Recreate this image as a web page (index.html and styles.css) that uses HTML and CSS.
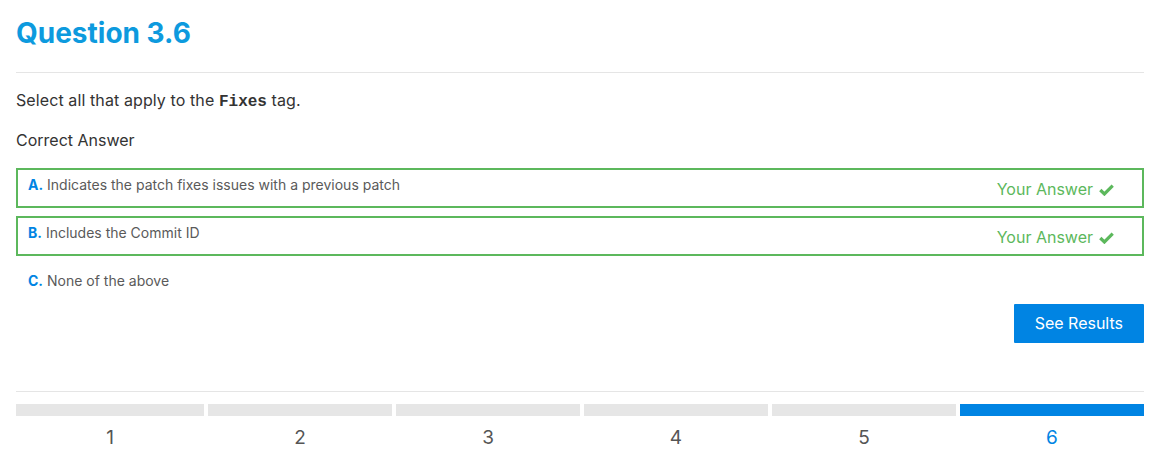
FILE: index.html
```html
<!DOCTYPE html>
<html>
<head>
<meta charset="utf-8">
<link rel="stylesheet" href="styles.css">
</head>
<body>
<div class="page">
  <h1 class="title">Question 3.6</h1>
  <hr class="rule">
  <p class="prompt">Select all that apply to the <code class="tag">Fixes</code> tag.</p>
  <p class="status">Correct Answer</p>
  <div class="options">
    <div class="option correct">
      <div class="label"><span class="letter">A.</span> Indicates the patch fixes issues with a previous patch</div>
      <div class="yours">Your Answer
        <svg class="check" width="15" height="12" viewBox="0 0 15 12"><path d="M1.3 6 L5.4 10 L13.7 1.7" fill="none" stroke="#5cb85c" stroke-width="3.2" stroke-linecap="butt" stroke-linejoin="miter"/></svg>
      </div>
    </div>
    <div class="option correct">
      <div class="label"><span class="letter">B.</span> Includes the Commit ID</div>
      <div class="yours">Your Answer
        <svg class="check" width="15" height="12" viewBox="0 0 15 12"><path d="M1.3 6 L5.4 10 L13.7 1.7" fill="none" stroke="#5cb85c" stroke-width="3.2" stroke-linecap="butt" stroke-linejoin="miter"/></svg>
      </div>
    </div>
    <div class="option">
      <div class="label"><span class="letter">C.</span> None of the above</div>
    </div>
  </div>
  <div class="actions">
    <button class="btn">See Results</button>
  </div>
  <hr class="rule rule-bottom">
  <div class="steps">
    <div class="step"><div class="bar"></div><div class="num">1</div></div>
    <div class="step"><div class="bar"></div><div class="num">2</div></div>
    <div class="step"><div class="bar"></div><div class="num">3</div></div>
    <div class="step"><div class="bar"></div><div class="num">4</div></div>
    <div class="step"><div class="bar"></div><div class="num">5</div></div>
    <div class="step active"><div class="bar"></div><div class="num">6</div></div>
  </div>
</div>
</body>
</html>
```

FILE: styles.css
```css
* { box-sizing: border-box; }
html, body { margin: 0; padding: 0; background: #fff; }
body {
  font-family: Inter, "Noto Sans", sans-serif;
  color: #333;
}
.page {
  padding: 16px 17px 0 16px;
}
.title {
  margin: 0;
  font-size: 28px;
  line-height: 34px;
  font-weight: 700;
  color: #0d9ade;
}
.rule {
  border: 0;
  border-top: 1px solid #e5e5e5;
  margin: 22px 0 0 0;
  height: 0;
}
.prompt {
  margin: 15px 0 0 0;
  font-size: 16px;
  line-height: 24px;
  letter-spacing: 0.1px;
}
.tag {
  font-family: "Liberation Mono", monospace;
  font-weight: 700;
  font-size: 16px;
  letter-spacing: 0;
}
.status {
  margin: 14px 0 0 0;
  font-size: 16px;
  line-height: 24px;
}
.options {
  margin-top: 16px;
  display: flex;
  flex-direction: column;
  gap: 8px;
}
.option {
  height: 40px;
  border: 2px solid transparent;
  padding: 5px 28px 0 10px;
  display: flex;
  justify-content: space-between;
  align-items: flex-start;
}
.option.correct { border-color: #5cb85c; }
.label {
  font-size: 14px;
  line-height: 20px;
  color: #5a5a5a;
}
.letter {
  color: #0084e3;
  font-weight: 700;
}
.yours {
  margin-top: 2px;
  font-size: 16px;
  line-height: 24px;
  color: #5cb85c;
  display: flex;
  align-items: center;
  gap: 6px;
}
.check { display: block; margin-top: 1px; }
.actions {
  display: flex;
  justify-content: flex-end;
}
.btn {
  font-family: Inter, "Noto Sans", sans-serif;
  font-size: 16px;
  line-height: 23px;
  padding: 8px 21px;
  background: #0084e3;
  color: #fff;
  border: 0;
  border-radius: 1px;
}
.rule-bottom { margin-top: 48px; }
.steps {
  margin-top: 12px;
  display: grid;
  grid-template-columns: repeat(6, 1fr);
}
.step + .step { padding-left: 4px; }
.bar {
  height: 12px;
  background: #e6e6e6;
}
.step.active .bar { background: #0084e3; }
.num {
  margin-top: 10px;
  text-align: center;
  font-size: 19px;
  line-height: 24px;
  color: #555;
}
.step.active .num { color: #0084e3; }
```
